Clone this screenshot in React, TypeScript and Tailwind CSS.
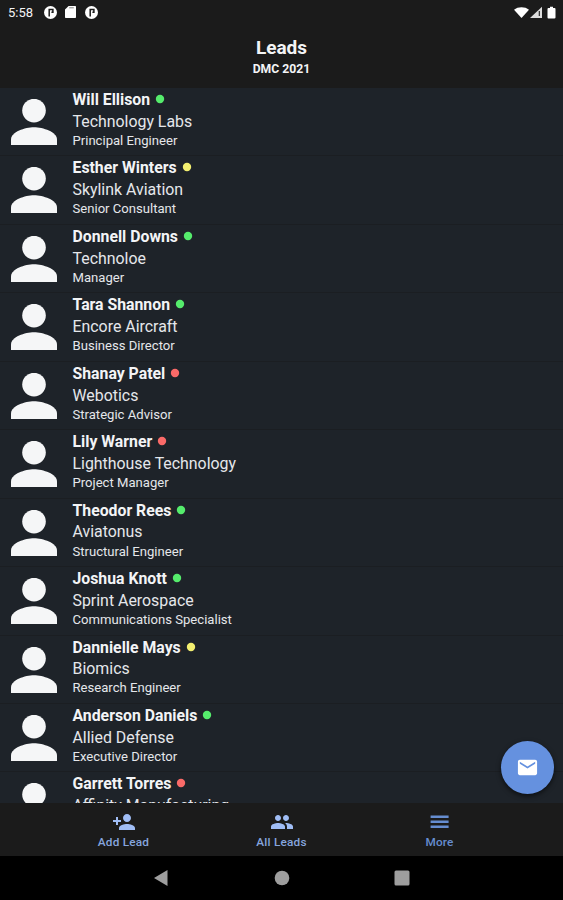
import React from 'react';
import { MdEmail, MdPeople, MdPersonAdd } from 'react-icons/md';

type Status = 'green' | 'yellow' | 'red';

interface Lead {
    name: string;
    company: string;
    title?: string;
    status: Status;
}

const leads: Lead[] = [
    { name: 'Will Ellison', company: 'Technology Labs', title: 'Principal Engineer', status: 'green' },
    { name: 'Esther Winters', company: 'Skylink Aviation', title: 'Senior Consultant', status: 'yellow' },
    { name: 'Donnell Downs', company: 'Technoloe', title: 'Manager', status: 'green' },
    { name: 'Tara Shannon', company: 'Encore Aircraft', title: 'Business Director', status: 'green' },
    { name: 'Shanay Patel', company: 'Webotics', title: 'Strategic Advisor', status: 'red' },
    { name: 'Lily Warner', company: 'Lighthouse Technology', title: 'Project Manager', status: 'red' },
    { name: 'Theodor Rees', company: 'Aviatonus', title: 'Structural Engineer', status: 'green' },
    { name: 'Joshua Knott', company: 'Sprint Aerospace', title: 'Communications Specialist', status: 'green' },
    { name: 'Dannielle Mays', company: 'Biomics', title: 'Research Engineer', status: 'yellow' },
    { name: 'Anderson Daniels', company: 'Allied Defense', title: 'Executive Director', status: 'green' },
    { name: 'Garrett Torres', company: 'Affinity Manufacturing', status: 'red' },
];

const statusColors: Record<Status, string> = {
    green: 'text-[#55ec6c]',
    yellow: 'text-[#f3ef70]',
    red: 'text-[#fa6a68]',
};

const AppBadge: React.FC = () => (
    <svg className="h-[13px] w-[13px]" viewBox="0 0 13 13">
        <circle cx="6.5" cy="6.5" r="6.5" fill="#fff" />
        <path d="M5.2 10.5V3.6h3.7v2.6H7.4" fill="none" stroke="#1b1b1b" strokeWidth="1.5" />
    </svg>
);

const StatusBar: React.FC = () => (
    <div className="flex h-6 shrink-0 items-center pl-2 pr-[6px]">
        <span className="w-9 pt-px text-[13px] leading-none text-gray-100">5:58</span>
        <AppBadge />
        <svg className="ml-2 h-3 w-[11px]" viewBox="0 0 11 12">
            <path d="M3.6 0H10c.6 0 1 .4 1 1v10c0 .6-.4 1-1 1H1c-.6 0-1-.4-1-1V3.6z" fill="#fff" />
            <path d="M4.2 1.8h4.6" stroke="#1b1b1b" strokeWidth=".9" strokeOpacity=".6" />
        </svg>
        <span className="ml-[9px]"><AppBadge /></span>
        <svg className="ml-auto h-[13px] w-[44px]" viewBox="0 0 44 13" fill="#fff">
            <path d="M1 3.7C5 .4 12 .4 16 3.7L8.5 12z" />
            <path d="M29 .8V12H17z" fillOpacity=".85" />
            <path d="M26.3 5v5" stroke="#1b1b1b" strokeWidth="1.1" />
            <path d="M37 .8h3v1.2h1.6c.5 0 .9.4.9.9v8.7c0 .5-.4.9-.9.9h-6.2a.9.9 0 0 1-.9-.9V2.9c0-.5.4-.9.9-.9H37z" />
        </svg>
    </div>
);

const LeadRow: React.FC<{ lead: Lead }> = ({ lead }) => (
    <li className="flex h-[68.45px] shrink-0 border-b border-[#1b1e22] pl-[11px]">
        <svg className="mt-[11px] h-[46px] w-[46px] shrink-0" viewBox="0 0 46 46" fill="#f5f6f7">
            <circle cx="23" cy="11.6" r="11.8" />
            <path d="M0 46v-5.5C0 33 14 28.3 23 28.3S46 33 46 40.5V46z" />
        </svg>
        <div className="ml-[15.5px] whitespace-nowrap">
            <div className="mt-[2px] flex h-5 items-center">
                <span className="text-[15.8px] font-bold leading-5 text-gray-100">{lead.name}</span>
                <svg className={`-mt-[2px] ml-[5px] h-[10px] w-[10px] ${statusColors[lead.status]}`} viewBox="0 0 10 10" fill="currentColor">
                    <circle cx="5" cy="5" r="4.2" />
                </svg>
            </div>
            <div className="mt-[1.8px] text-[15.9px] leading-5 text-gray-200">{lead.company}</div>
            {lead.title && (
                <div className="mt-[0.2px] text-[13.1px] leading-[18px] text-gray-200">{lead.title}</div>
            )}
        </div>
    </li>
);

const App: React.FC = () => {
    return (
        <div className="relative flex h-[900px] w-[563px] flex-col overflow-hidden bg-[#1b1b1b] font-['Roboto',sans-serif] text-white">
            <StatusBar />

            <header className="flex h-16 shrink-0 flex-col items-center pt-3">
                <h1 className="text-[19px] font-bold leading-6 text-gray-100">Leads</h1>
                <p className="pt-px text-[12.2px] font-bold leading-4 text-gray-100">DMC 2021</p>
            </header>

            <ul className="flex h-[715px] shrink-0 flex-col overflow-hidden bg-[#1e2329]">
                {leads.map((lead) => (
                    <LeadRow key={lead.name} lead={lead} />
                ))}
            </ul>

            {/* Tab bar */}
            <nav className="grid h-[53px] shrink-0 grid-cols-[158px_158px_158px] justify-center text-[11.8px] font-medium tracking-[0.2px] text-[#86a5de]">
                <div className="flex flex-col items-center pt-[7px]">
                    <MdPersonAdd className="h-6 w-6 text-[#a0bdf5]" />
                    <span className="leading-4">Add Lead</span>
                </div>
                <div className="flex flex-col items-center pt-[7px]">
                    <MdPeople className="h-6 w-6 text-[#a0bdf5]" />
                    <span className="leading-4">All Leads</span>
                </div>
                <div className="flex flex-col items-center pt-[7px] text-[#668dd0]">
                    <svg className="h-6 w-6" viewBox="0 0 24 24" fill="currentColor">
                        <path d="M2.6 5.5h18V8h-18zm0 5h18V13h-18zm0 5h18V18h-18z" />
                    </svg>
                    <span className="leading-4">More</span>
                </div>
            </nav>

            {/* Android navigation */}
            <div className="flex flex-1 items-center justify-center bg-black">
                <svg className="h-4 w-[260px]" viewBox="0 0 260 16" fill="#9e9e9e">
                    <path d="M2 8L15.5 0v16z" />
                    <circle cx="130" cy="8" r="7.3" />
                    <rect x="242.5" y=".5" width="15" height="15" rx="1.5" />
                </svg>
            </div>

            <button className="absolute bottom-[106px] right-[9px] flex h-[53px] w-[53px] items-center justify-center rounded-full bg-[#6591df] shadow-[0_2px_5px_rgba(0,0,0,0.6)]">
                <MdEmail className="h-[23px] w-[23px]" />
            </button>
        </div>
    );
};

export default App;
